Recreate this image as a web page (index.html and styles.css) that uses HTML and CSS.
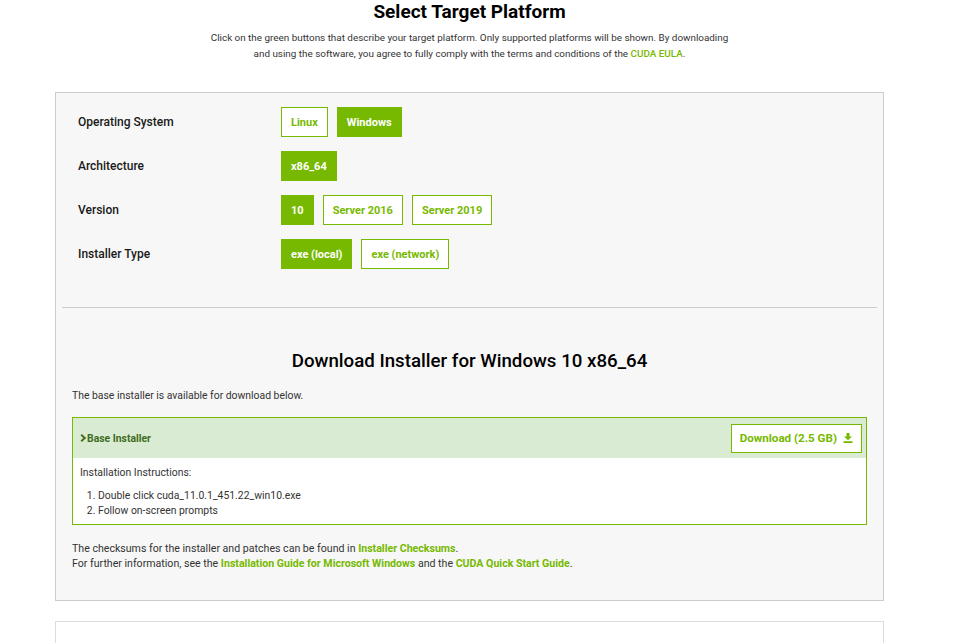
FILE: index.html
```html
<!DOCTYPE html>
<html>
<head>
<meta charset="utf-8">
<link rel="stylesheet" href="styles.css">
</head>
<body>
<div class="page">
  <h1 class="title">Select Target Platform</h1>
  <p class="intro">Click on the green buttons that describe your target platform. Only supported platforms will be shown. By downloading<br>and using the software, you agree to fully comply with the terms and conditions of the <a class="link">CUDA EULA</a>.</p>

  <div class="panel">
    <div class="selector">
      <div class="row">
        <div class="label">Operating System</div>
        <div class="opts">
          <span class="btn">Linux</span>
          <span class="btn on">Windows</span>
        </div>
      </div>
      <div class="row">
        <div class="label">Architecture</div>
        <div class="opts">
          <span class="btn on">x86_64</span>
        </div>
      </div>
      <div class="row">
        <div class="label">Version</div>
        <div class="opts">
          <span class="btn on">10</span>
          <span class="btn">Server 2016</span>
          <span class="btn">Server 2019</span>
        </div>
      </div>
      <div class="row">
        <div class="label">Installer Type</div>
        <div class="opts">
          <span class="btn on">exe (local)</span>
          <span class="btn">exe (network)</span>
        </div>
      </div>
    </div>
    <hr class="sep">
    <div class="downloads">
      <h2 class="dl-title">Download Installer for Windows 10 x86_64</h2>
      <p class="small">The base installer is available for download below.</p>
      <div class="box">
        <div class="box-head">
          <span class="box-name"><svg class="chev" width="7" height="8" viewBox="0 0 7 8"><path d="M1.2 0.8 L4.8 4 L1.2 7.2" fill="none" stroke="#3f6d1e" stroke-width="1.9"/></svg>Base Installer</span>
          <span class="dl-btn">Download (2.5 GB)<svg class="dl-icon" width="10" height="10" viewBox="0 0 10 10"><path d="M3.5 0 H6.5 V3.5 H9 L5 7.2 L1 3.5 H3.5 Z" fill="#76b900"/><rect x="0.5" y="8.2" width="9" height="1.8" fill="#76b900"/></svg></span>
        </div>
        <div class="box-body">
          <p class="small">Installation Instructions:</p>
          <ol class="steps">
            <li>Double click cuda_11.0.1_451.22_win10.exe</li>
            <li>Follow on-screen prompts</li>
          </ol>
        </div>
      </div>
      <p class="small foot">The checksums for the installer and patches can be found in <a class="link bold">Installer Checksums</a>.<br>For further information, see the <a class="link bold">Installation Guide for Microsoft Windows</a> and the <a class="link bold">CUDA Quick Start Guide</a>.</p>
    </div>
  </div>
  <div class="panel2"></div>
</div>
</body>
</html>
```

FILE: styles.css
```css
html, body {
  margin: 0;
  padding: 0;
  background: #ffffff;
}
body {
  font-family: Roboto, "Liberation Sans", sans-serif;
  color: #1a1a1a;
}
.page {
  width: 829px;
  margin-left: 55px;
}
.title {
  margin: 0;
  padding-top: 0;
  text-align: center;
  font-size: 19px;
  line-height: 24px;
  font-weight: 700;
  color: #000;
}
.intro {
  margin: 6px 0 0 0;
  text-align: center;
  font-size: 9.9px;
  line-height: 16px;
  color: #333;
}
.link {
  color: #76b900;
  font-weight: 500;
}
.link.bold {
  font-weight: 700;
}
.panel {
  margin-top: 30px;
  border: 1px solid #cccccc;
  background: #f7f7f7;
  height: 509px;
  box-sizing: border-box;
}
.selector {
  padding: 14px 0 0 22px;
  display: flex;
  flex-direction: column;
  gap: 14px;
}
.row {
  display: flex;
  align-items: center;
  height: 30px;
}
.label {
  width: 203px;
  font-size: 12px;
  font-weight: 500;
  color: #1a1a1a;
  margin-top: -1px;
}
.opts {
  display: flex;
  gap: 9px;
}
.btn {
  box-sizing: border-box;
  height: 30px;
  display: flex;
  align-items: center;
  padding: 0 9px;
  border: 1px solid #76b900;
  background: #fff;
  color: #76b900;
  font-size: 11px;
  font-weight: 700;
}
.btn.on {
  background: #76b900;
  color: #fff;
}
.sep {
  margin: 38px 6px 0 6px;
  border: 0;
  border-top: 1px solid #cccccc;
  height: 0;
}
.downloads {
  padding: 0 16px;
}
.dl-title {
  margin: 41px 0 0 0;
  text-align: center;
  font-size: 18.7px;
  line-height: 24px;
  font-weight: 500;
  color: #000;
}
.small {
  margin: 0;
  font-size: 10.4px;
  line-height: 15px;
  color: #333;
}
.downloads > .small {
  margin-top: 15px;
}
.box {
  margin-top: 14px;
  border: 1px solid #76b900;
  background: #fff;
}
.box-head {
  height: 40px;
  background: #d9ebd3;
  display: flex;
  align-items: center;
  justify-content: space-between;
  padding: 0 4px 0 7px;
}
.box-name {
  display: flex;
  align-items: center;
  gap: 0;
  font-size: 10.4px;
  font-weight: 700;
  color: #3f6d1e;
}
.dl-btn {
  box-sizing: border-box;
  height: 29px;
  display: flex;
  align-items: center;
  gap: 6px;
  padding: 0 8px 0 8px;
  border: 1px solid #76b900;
  background: #fff;
  color: #76b900;
  font-size: 11.6px;
  font-weight: 700;
}
.box-body {
  padding: 7px 7px 6px 7px;
}
.steps {
  margin: 8px 0 0 0;
  padding-left: 18px;
  font-size: 10.4px;
  line-height: 15px;
  color: #333;
}
.downloads > .foot {
  margin-top: 16px;
  font-size: 10.6px;
}
.panel2 {
  margin-top: 20px;
  height: 40px;
  border: 1px solid #dddddd;
  border-bottom: 0;
}
```
